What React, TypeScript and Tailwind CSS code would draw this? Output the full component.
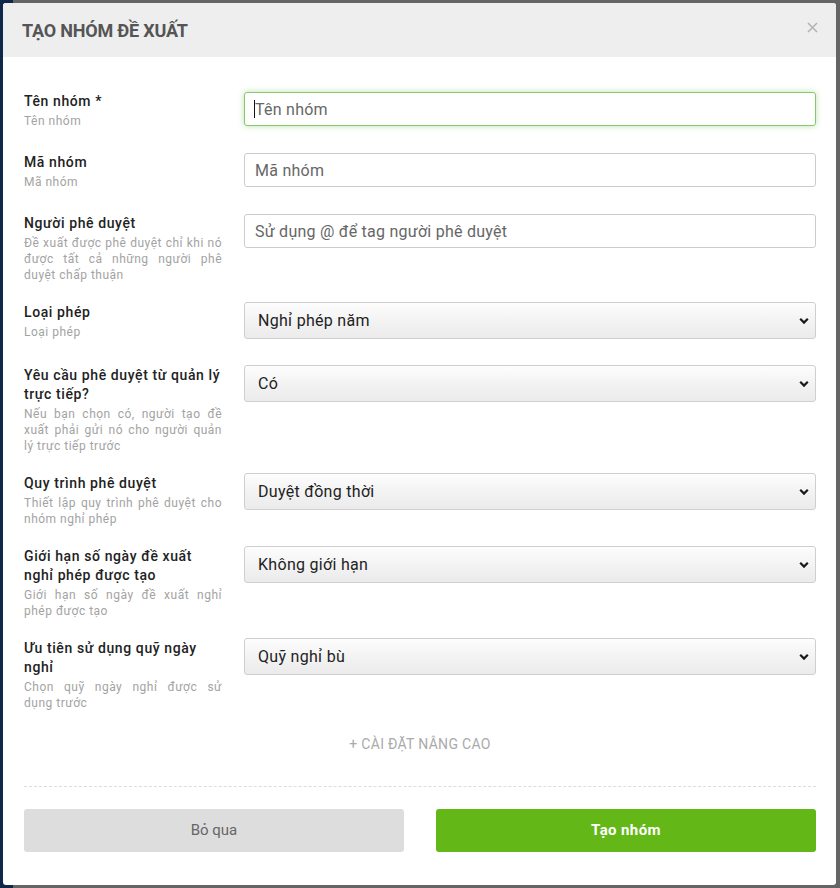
type Field =
  | { kind: "input"; placeholder: string; focused?: boolean }
  | { kind: "select"; value: string };

type Row = {
  title: string;
  hint: string;
  field: Field;
};

const ROWS: Row[] = [
  {
    title: "Tên nhóm *",
    hint: "Tên nhóm",
    field: { kind: "input", placeholder: "Tên nhóm", focused: true },
  },
  {
    title: "Mã nhóm",
    hint: "Mã nhóm",
    field: { kind: "input", placeholder: "Mã nhóm" },
  },
  {
    title: "Người phê duyệt",
    hint: "Đề xuất được phê duyệt chỉ khi nó được tất cả những người phê duyệt chấp thuận",
    field: { kind: "input", placeholder: "Sử dụng @ để tag người phê duyệt" },
  },
  {
    title: "Loại phép",
    hint: "Loại phép",
    field: { kind: "select", value: "Nghỉ phép năm" },
  },
  {
    title: "Yêu cầu phê duyệt từ quản lý trực tiếp?",
    hint: "Nếu bạn chọn có, người tạo đề xuất phải gửi nó cho người quản lý trực tiếp trước",
    field: { kind: "select", value: "Có" },
  },
  {
    title: "Quy trình phê duyệt",
    hint: "Thiết lập quy trình phê duyệt cho nhóm nghỉ phép",
    field: { kind: "select", value: "Duyệt đồng thời" },
  },
  {
    title: "Giới hạn số ngày đề xuất nghỉ phép được tạo",
    hint: "Giới hạn số ngày đề xuất nghỉ phép được tạo",
    field: { kind: "select", value: "Không giới hạn" },
  },
  {
    title: "Ưu tiên sử dụng quỹ ngày nghỉ",
    // nbsp keeps "dụng trước" together so it wraps like the original
    hint: "Chọn quỹ ngày nghỉ được sử dụng\u00a0trước",
    field: { kind: "select", value: "Quỹ nghỉ bù" },
  },
];

function TextInput({ placeholder, focused }: { placeholder: string; focused?: boolean }) {
  return (
    <div className="relative mt-px">
      <input
        type="text"
        placeholder={placeholder}
        className={
          focused
            ? "h-[34px] w-full rounded-[3px] border border-[#86c96c] bg-white px-[10px] text-[16px] tracking-[0.25px] text-[#333] shadow-[0_0_6px_rgba(110,190,70,0.45)] outline-none placeholder:text-[#666]"
            : "h-[34px] w-full rounded-[3px] border border-[#cccccc] bg-white px-[10px] text-[16px] tracking-[0.25px] text-[#333] outline-none placeholder:text-[#666]"
        }
      />
      {focused && (
        <span className="pointer-events-none absolute top-[8px] left-[10px] h-[18px] w-px bg-[#111]" />
      )}
    </div>
  );
}

function SelectBox({ value }: { value: string }) {
  return (
    <div className="relative">
      <select
        defaultValue={value}
        className="h-[37px] w-full appearance-none rounded-[3px] border border-[#cfcfcf] bg-linear-to-b from-[#fdfdfd] via-[#f3f3f3] to-[#ebebeb] pr-8 pl-[13px] text-[16px] tracking-[0.3px] text-[#222] outline-none"
      >
        <option>{value}</option>
      </select>
      <svg
        className="pointer-events-none absolute top-1/2 right-[7px] -translate-y-1/2"
        width="10"
        height="7"
        viewBox="0 0 10 7"
        fill="none"
      >
        <path d="M1.2 1.3 5 5.1l3.8-3.8" stroke="#1a1a1a" strokeWidth="2.2" />
      </svg>
    </div>
  );
}

function FormRow({ row, last }: { row: Row; last: boolean }) {
  return (
    <div className={last ? "flex items-start gap-[22px]" : "mb-[19px] flex items-start gap-[22px]"}>
      <div className="w-[198px] shrink-0 pt-px">
        <div className="text-[14px] leading-[19px] font-medium tracking-[0.6px] text-[#222]">
          {row.title}
        </div>
        <p className="mt-[2px] text-justify text-[12px] leading-4 tracking-[0.5px] text-[#a3a3a3]">
          {row.hint}
        </p>
      </div>
      <div className="min-w-0 flex-1 pb-[7px]">
        {row.field.kind === "input" ? (
          <TextInput placeholder={row.field.placeholder} focused={row.field.focused} />
        ) : (
          <SelectBox value={row.field.value} />
        )}
      </div>
    </div>
  );
}

export default function App() {
  return (
    <div className="relative h-[888px] w-[840px] overflow-hidden bg-[#656565] font-['Roboto','Liberation_Sans',sans-serif]">
      {/* page behind the overlay */}
      <div className="absolute top-0 bottom-0 left-0 w-[13px] bg-[#0f2848]" />

      <div className="relative mt-[3px] ml-[3px] flex h-[882px] w-[833px] flex-col overflow-hidden rounded-[3px] bg-white">
        <div className="flex h-[54px] shrink-0 items-center justify-between bg-[#eeeeee] pr-[16px] pl-[19px]">
          <span className="text-[18px] font-bold tracking-[-0.2px] text-[#555555]">
            TẠO NHÓM ĐỀ XUẤT
          </span>
          <button type="button" className="-mt-[6px] p-0.5">
            <svg width="11" height="11" viewBox="0 0 11 11">
              <path d="M1 1l9 9M10 1l-9 9" stroke="#b2b2b2" strokeWidth="1.5" />
            </svg>
          </button>
        </div>

        <div className="flex flex-1 flex-col pt-[34px] pr-5 pl-[21px]">
          {ROWS.map((row, i) => (
            <FormRow key={row.title} row={row} last={i === ROWS.length - 1} />
          ))}

          <div className="mt-[23px] text-center text-[14px] leading-5 tracking-[0.3px] text-[#aaaaaa]">
            + CÀI ĐẶT NÂNG CAO
          </div>

          <div className="mt-[32px] border-t border-dashed border-[#dddddd]" />

          <div className="mt-[22px] flex gap-8">
            <button
              type="button"
              className="h-[43px] flex-1 rounded-[3px] bg-[#dddddd] text-[15px] text-[#666666]"
            >
              Bỏ qua
            </button>
            <button
              type="button"
              className="h-[43px] flex-1 rounded-[3px] bg-[#63b717] text-[15px] font-bold tracking-[0.4px] text-white"
            >
              Tạo nhóm
            </button>
          </div>
        </div>
      </div>
    </div>
  );
}
